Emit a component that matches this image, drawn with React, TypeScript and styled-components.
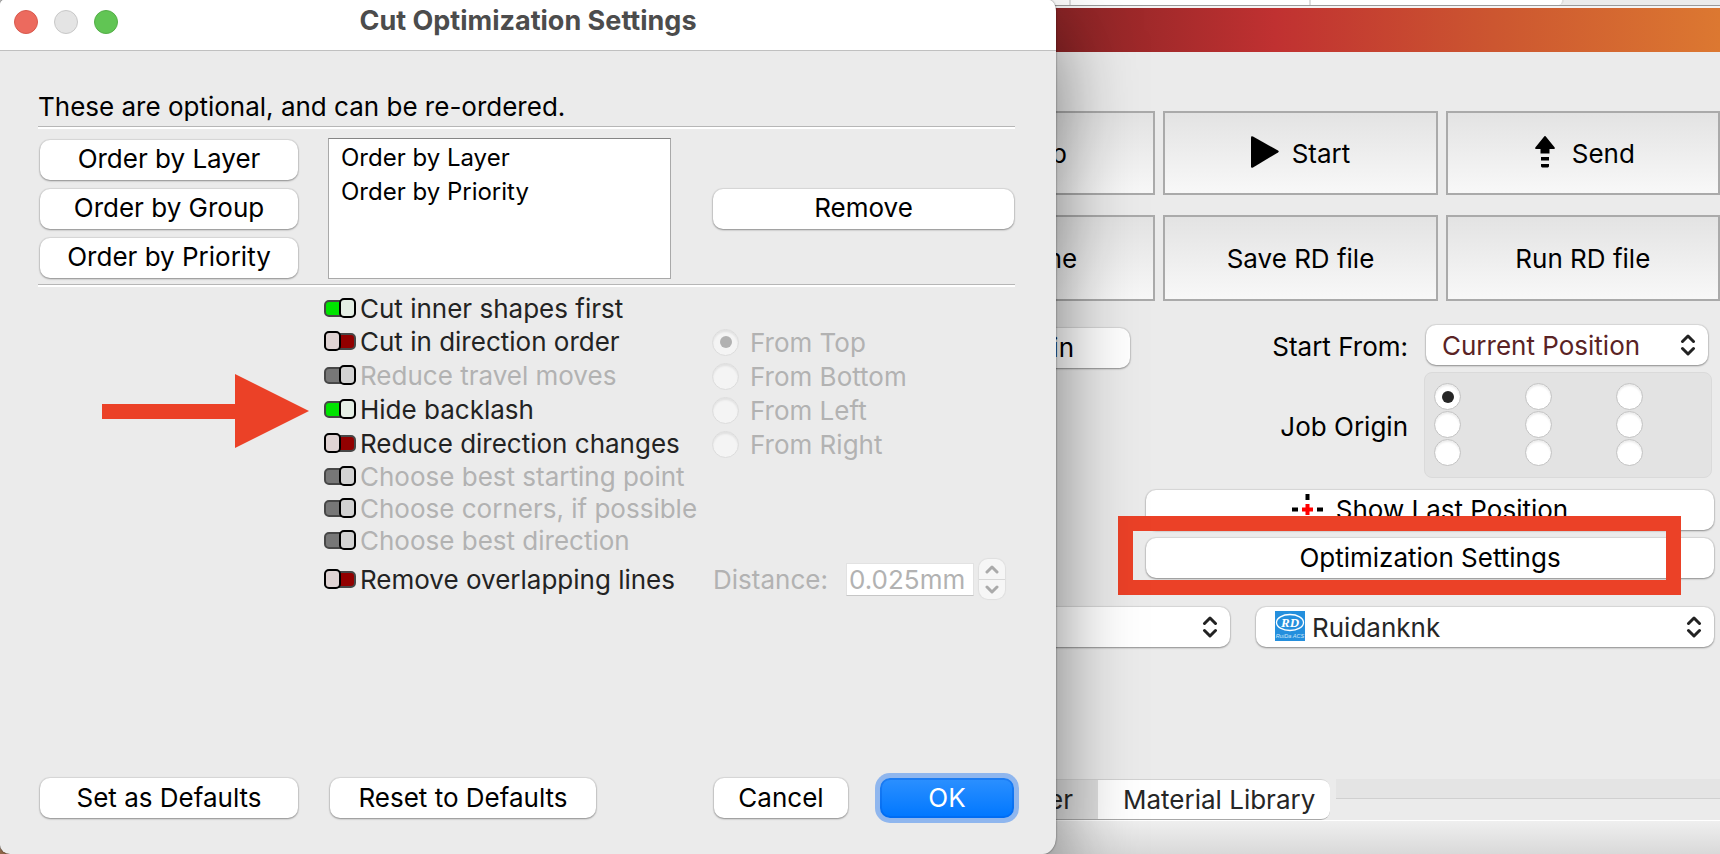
import React from "react";
import styled, { createGlobalStyle, css } from "styled-components";

const GlobalStyle = createGlobalStyle`
  *, *::before, *::after { box-sizing: border-box; }
  body {
    margin: 0;
    background: #c4c4c4;
    color: #000;
    font: 400 26px/32px Inter, "Liberation Sans", sans-serif;
  }
  button, input, select { font: inherit; color: inherit; margin: 0; }
  fieldset { border: 0; margin: 0; padding: 0; min-width: 0; }
`;

const Desktop = styled.div`
  display: grid;
  grid-template-columns: 132fr 83fr;
  min-height: 100vh;
  overflow: hidden;
  background: linear-gradient(#c4c4c4 calc(100% - 9px), #b5825c calc(100% - 3px));
`;

/* ---------- shared controls ---------- */

const raised = css`
  border: 0;
  border-radius: 10px;
  background: #fff;
  box-shadow: 0 0 1px 1px rgba(0, 0, 0, 0.08), 0 1px 2px rgba(0, 0, 0, 0.35);
`;

const PushButton = styled.button<{ $primary?: boolean }>`
  ${raised}
  display: flex;
  align-items: center;
  justify-content: center;
  gap: 13px;
  height: 40px;
  padding: 0 16px 1px;
  white-space: nowrap;
  ${(p) =>
    p.$primary &&
    css`
      color: #fff;
      background: linear-gradient(#2c90ff, #0077ff);
      box-shadow: inset 0 0 0 2px rgba(0, 90, 220, 0.35), 0 0 0 5px #8fb6ee;
    `}
`;

const Radio = styled.input.attrs({ type: "radio" })`
  appearance: none;
  flex: none;
  display: grid;
  place-items: center;
  width: 27px;
  height: 27px;
  border-radius: 50%;
  border: 1px solid #c2c2c2;
  background: #fff;
  box-shadow: inset 0 2px 2px rgba(0, 0, 0, 0.08);
  &:checked::before {
    content: "";
    width: 12px;
    height: 12px;
    border-radius: 50%;
    background: #262626;
  }
  &:disabled {
    border-color: #dcdcdc;
    background: #f4f4f4;
  }
  &:disabled:checked::before { background: #b1b1b1; }
`;

const SelectBox = styled.div`
  position: relative;
  min-width: 0;
  svg { position: absolute; right: 12px; top: 9px; pointer-events: none; }
`;

const Select = styled.select<{ $color: string; $indent: number }>`
  ${raised}
  appearance: none;
  display: block;
  width: 100%;
  height: 40px;
  padding: 2px 40px 0 ${(p) => p.$indent}px;
  color: ${(p) => p.$color};
`;

const Chevrons = () => (
  <svg width="16" height="22" viewBox="0 0 16 22" fill="none" stroke="#222" strokeWidth="3" strokeLinecap="round" strokeLinejoin="round" aria-hidden="true">
    <path d="M2.5 7.5 8 2l5.500 5.500M2.500 14.500 8 20l5.500-5.500" />
  </svg>
);

/* ---------- dialog ---------- */

const Dialog = styled.form`
  grid-area: 1 / 1;
  position: relative;
  z-index: 1;
  display: flex;
  flex-direction: column;
  min-width: 0;
  background: #ebebeb;
  border-radius: 4px 7px 13px 10px / 5px 12px 17px 9px;
  box-shadow: 0 0 2px rgba(0, 0, 0, 0.6), 0 30px 80px rgba(0, 0, 0, 0.5);
`;

const TitleBar = styled.header`
  display: grid;
  grid-template-columns: 1fr auto 1fr;
  height: 51px;
  padding: 0 14px;
  background: #fff;
  border-bottom: 1px solid #c0c0c0;
  border-radius: 4px 7px 0 0 / 5px 12px 0 0;
`;

const Lights = styled.div`
  display: flex;
  gap: 16px;
  padding-top: 10px;
`;

const Light = styled.button<{ $fill: string; $edge: string }>`
  width: 24px;
  height: 24px;
  padding: 0;
  border-radius: 50%;
  border: 1px solid ${(p) => p.$edge};
  background: ${(p) => p.$fill};
`;

const Title = styled.h1`
  margin: 0;
  padding-top: 5px;
  font-size: 27px;
  line-height: 32px;
  font-weight: 700;
  color: #4c4c4c;
`;

const DialogBody = styled.div`
  display: flex;
  flex-direction: column;
  flex: 1;
  padding: 40px 41px 36px 38px;
`;

const Intro = styled.p`
  margin: 0 0 3px;
`;

const Rule = styled.hr`
  width: 100%;
  height: 3px;
  margin: 0;
  border: 0;
  border-top: 1px solid #b6b6b6;
  background: #fff;
`;

const Ordering = styled.section`
  display: grid;
  grid-template-columns: 258px 343px minmax(0, 1fr);
  column-gap: 30px;
  align-items: center;
  padding: 9px 1px 5px 2px;
`;

const OrderButtons = styled.div`
  display: grid;
  gap: 9px;
`;

const OrderList = styled.ul`
  list-style: none;
  align-self: stretch;
  min-height: 141px;
  margin: 0;
  padding: 2px 12px;
  background: #fff;
  border: 1px solid #a9a9a9;
  border-top-color: #858585;
  font-size: 24px;
  line-height: 34px;
`;

const RemoveButton = styled(PushButton)`
  margin-left: 12px;
`;

const Options = styled.section`
  display: grid;
  grid-template-columns: minmax(0, 388px) 1fr;
  padding: 5px 0 0 286px;
`;

const OptionGroup = styled.div<{ $row: number }>`
  grid-column: 1;
  display: grid;
  grid-auto-rows: ${(p) => p.$row}px;
  white-space: nowrap;
`;

const Option = styled.label<{ $off?: boolean; $gap: number }>`
  display: flex;
  align-items: center;
  gap: ${(p) => p.$gap}px;
  color: ${(p) => (p.$off ? "#b2b2b2" : "#232323")};
`;

const OptionText = styled.span`
  padding-top: 2px;
`;

const Toggle = styled.input.attrs({ type: "checkbox" })`
  appearance: none;
  flex: none;
  display: grid;
  grid-template-columns: 1fr;
  align-items: center;
  width: 32px;
  height: 20px;
  &::before, &::after {
    content: "";
    grid-area: 1 / 1;
  }
  &::before {
    height: 17px;
    border: 2px solid #474747;
    border-radius: 5px;
    background: #920000;
  }
  &::after {
    width: 17px;
    height: 20px;
    border: 2px solid #000;
    border-radius: 5px;
    background: #dfd3d3;
  }
  &:checked::before { background: #00e400; }
  &:checked::after { justify-self: end; background: #e5efe5; }
  &:disabled::before { background: #777; }
  &:disabled::after { background: #d2d2d2; }
`;

const Directions = styled.fieldset`
  grid-column: 2;
  display: grid;
  grid-auto-rows: 34px;
  margin: 1px 0 -1px;
`;

const Distance = styled.div`
  grid-column: 2;
  display: flex;
  align-items: center;
  color: #b2b2b2;
  label { width: 134px; padding: 2px 0 0 1px; }
`;

const DistanceInput = styled.input`
  width: 128px;
  height: 33px;
  padding: 0 2px;
  border: 1px solid #e2e2e2;
  border-bottom: 1px solid #c6c6c6;
  background: #fff;
`;

const Stepper = styled.div`
  display: grid;
  grid-template-rows: 1fr 1fr;
  width: 26px;
  height: 40px;
  margin-left: 5px;
  border-radius: 9px;
  background: #f6f6f6;
  box-shadow: 0 0 1px 1px rgba(0, 0, 0, 0.05);
`;

const Step = styled.button`
  display: grid;
  place-items: center;
  padding: 0;
  border: 0;
  background: none;
  & + & { border-top: 1px solid #d8d8d8; }
`;

const StepIcon = ({ d }: { d: string }) => (
  <svg width="14" height="10" viewBox="0 0 14 10" fill="none" stroke="#aaa" strokeWidth="3" strokeLinecap="round" strokeLinejoin="round" aria-hidden="true">
    <path d={d} />
  </svg>
);

const DialogFooter = styled.footer`
  display: grid;
  grid-template-columns: 258px 266px 1fr 134px 134px;
  column-gap: 32px;
  margin-top: auto;
  padding: 0 1px 0 2px;
  ${PushButton}:nth-last-child(2) { grid-column: 4; }
`;

const PointerArrow = styled.svg`
  position: absolute;
  left: 102px;
  top: 374px;
`;

/* ---------- window behind ---------- */

const MainWindow = styled.main`
  grid-area: 1 / 2;
  display: flex;
  flex-direction: column;
  min-width: 0;
  margin-left: -175px;
  background: #ebebeb;
`;

const TopStrip = styled.div`
  display: flex;
  height: 8px;
  border-bottom: 2px solid #f4f4f4;
  background: linear-gradient(#ebebeb 5px, #9a9a9a 5px);
`;

const TopTab = styled.div<{ $width: number; $last?: boolean }>`
  width: ${(p) => p.$width}px;
  height: 5px;
  background: #fff;
  border-right: 2px solid #dedede;
  border-bottom-right-radius: ${(p) => (p.$last ? 6 : 0)}px;
`;

const Banner = styled.div`
  height: 44px;
  background: linear-gradient(90deg, #882325 20%, #c03131 47%, #cc5630 73%, #dc7831);
`;

const Panel = styled.div`
  display: flex;
  flex-direction: column;
  padding-top: 59px;
`;

const JobButtons = styled.div`
  display: grid;
  grid-template-columns: repeat(3, 1fr);
  grid-template-rows: 84px 86px;
  gap: 20px 8px;
`;

const JobButton = styled.button`
  display: flex;
  align-items: center;
  justify-content: center;
  gap: 13px;
  padding: 2px 0 0;
  border: 2px solid #aaa;
  background: linear-gradient(#e3e3e3, #f8f8f8);
  white-space: nowrap;
  svg { margin-bottom: 4px; }
`;

const PositionGrid = styled.div`
  display: grid;
  grid-template-columns: 249px 1fr 288px;
  grid-template-rows: 43px 106px;
  gap: 4px 16px;
  padding: 24px 8px 0 0;
`;

const GoButton = styled(PushButton)`
  align-self: end;
  justify-content: flex-end;
  padding-right: 56px;
`;

const FieldLabel = styled.label`
  grid-column: 2;
  padding-top: 6px;
  text-align: right;
  white-space: nowrap;
`;

const OriginLabel = styled.span`
  grid-column: 2;
  align-self: center;
  padding-top: 3px;
  text-align: right;
  white-space: nowrap;
`;

const StartSelect = styled(SelectBox)`
  margin: 0 4px 0 2px;
`;

const OriginGrid = styled.div`
  display: grid;
  grid-template-columns: 1fr 1fr 1fr;
  grid-auto-rows: 28px;
  padding: 10px 4px 0 9px;
  border: 1px solid #dadada;
  border-radius: 8px;
  background: #e3e3e3;
`;

const WideButtons = styled.div`
  position: relative;
  display: grid;
  gap: 8px;
  margin: 12px 6px 29px 265px;
`;

const Highlight = styled.div`
  position: absolute;
  left: -28px;
  right: 33px;
  top: 26px;
  height: 79px;
  border: 15px solid #eb4127;
  pointer-events: none;
`;

const DeviceRow = styled.div`
  display: grid;
  grid-template-columns: 349fr 458fr;
  gap: 26px;
  padding-right: 6px;
`;

const DeviceBox = styled(SelectBox)`
  svg:first-child { right: auto; left: 19px; top: 4px; }
`;

const TabRow = styled.div`
  display: flex;
  margin-top: auto;
  height: 42px;
  border-bottom: 1px solid #fff;
`;

const Tab = styled.button<{ $active?: boolean }>`
  display: flex;
  justify-content: ${(p) => (p.$active ? "flex-start" : "flex-end")};
  align-items: center;
  flex: 0 0 ${(p) => (p.$active ? 232 : 217)}px;
  padding: ${(p) => (p.$active ? "0 0 0 25px" : "0 25px 0 0")};
  border: 1px solid #d2d2d2;
  border-width: 1px 0;
  border-bottom-color: #a8a8a8;
  border-radius: ${(p) => (p.$active ? "0 9px 9px 0" : "9px 0 0 9px")};
  background: ${(p) => (p.$active ? "#fff" : "#dfdfdf")};
  color: #262626;
  white-space: nowrap;
`;

const TabFiller = styled.div`
  flex: 1;
  height: 20px;
  margin-left: 6px;
  background: #e4e4e4;
  border-bottom: 1px solid #d0d0d0;
`;

const WindowFoot = styled.div`
  height: 33px;
  background: linear-gradient(#efefef, #d9d9d9);
`;

/* ---------- icons ---------- */

const PlayIcon = () => (
  <svg width="28" height="32" viewBox="0 0 28 32" aria-hidden="true">
    <path d="M0 1.500Q0-.5 2 .5L27 14.500q1.500 1 0 2L2 31.500q-2 1-2-1z" />
  </svg>
);

const StopIcon = () => (
  <svg width="28" height="32" viewBox="0 0 28 32" aria-hidden="true">
    <rect y="2" width="28" height="28" rx="1" />
  </svg>
);

const SendIcon = () => (
  <svg width="28" height="32" viewBox="0 0 28 32" aria-hidden="true">
    <path d="M14 0q.6 0 1.200 1l8.500 10.500q.6 1.500-.7 1.500h-4.500v4.500h-9V13H5q-1.300 0-.7-1.500L12.800 1q.6-1 1.200-1zM10 21h8v3.500h-8zM10 28h8v2.500l-1 1h-6l-1-1z" />
  </svg>
);

const FrameIcon = () => (
  <svg width="28" height="32" viewBox="0 0 28 32" fill="none" stroke="#000" strokeWidth="3" aria-hidden="true">
    <rect x="2" y="4" width="24" height="24" strokeDasharray="5 3" />
  </svg>
);

const CrosshairIcon = () => (
  <svg width="31" height="31" viewBox="0 0 31 31" strokeWidth="4" aria-hidden="true">
    <path stroke="#000" d="M0 15.500h6M25 15.500h6M15.500 0v6M15.500 25v6" />
    <path stroke="#f00" d="M10 15.500h11M15.500 10v11" />
  </svg>
);

const RuidaLogo = () => (
  <svg width="30" height="30" viewBox="0 0 30 30" aria-hidden="true">
    <rect width="30" height="30" fill="#248fdd" />
    <ellipse cx="15" cy="11.500" rx="13.500" ry="8" fill="none" stroke="#fff" strokeWidth="1.300" />
    <text x="15" y="16" textAnchor="middle" fill="#fff" fontFamily="Liberation Serif, serif" fontSize="13" fontWeight="700" fontStyle="italic">RD</text>
    <text x="15" y="26.500" textAnchor="middle" fill="#cfe6f8" fontFamily="Liberation Sans, sans-serif" fontSize="5.600" fontStyle="italic">RuiDa ACS</text>
  </svg>
);

/* ---------- data ---------- */

type Opt = { label: string; on: boolean; disabled?: boolean };

const optionGroups: { row: number; items: Opt[] }[] = [
  { row: 32, items: [{ label: "Cut inner shapes first", on: true }] },
  {
    row: 34,
    items: [
      { label: "Cut in direction order", on: false },
      { label: "Reduce travel moves", on: true, disabled: true },
      { label: "Hide backlash", on: true },
      { label: "Reduce direction changes", on: false },
    ],
  },
  {
    row: 32,
    items: [
      { label: "Choose best starting point", on: true, disabled: true },
      { label: "Choose corners, if possible", on: true, disabled: true },
      { label: "Choose best direction", on: true, disabled: true },
    ],
  },
  { row: 46, items: [{ label: "Remove overlapping lines", on: false }] },
];

const directions = ["From Top", "From Bottom", "From Left", "From Right"];
const origins = [
  "Top left", "Top", "Top right",
  "Left", "Center", "Right",
  "Bottom left", "Bottom", "Bottom right",
];

export default function App() {
  return (
    <Desktop>
      <GlobalStyle />
      <Dialog role="dialog" aria-labelledby="dialog-title" onSubmit={(e) => e.preventDefault()}>
        <TitleBar>
          <Lights>
            <Light type="button" aria-label="Close" $fill="#ec6a5e" $edge="#d8594d" />
            <Light type="button" aria-label="Minimize" $fill="#e4e4e4" $edge="#c8c8c8" />
            <Light type="button" aria-label="Zoom" $fill="#61c554" $edge="#54ae48" />
          </Lights>
          <Title id="dialog-title">Cut Optimization Settings</Title>
        </TitleBar>
        <DialogBody>
          <Intro>These are optional, and can be re-ordered.</Intro>
          <Rule />
          <Ordering>
            <OrderButtons>
              <PushButton type="button">Order by Layer</PushButton>
              <PushButton type="button">Order by Group</PushButton>
              <PushButton type="button">Order by Priority</PushButton>
            </OrderButtons>
            <OrderList>
              <li>Order by Layer</li>
              <li>Order by Priority</li>
            </OrderList>
            <RemoveButton type="button">Remove</RemoveButton>
          </Ordering>
          <Rule />
          <Options>
            {optionGroups.map((group, i) => (
              <React.Fragment key={i}>
                <OptionGroup $row={group.row}>
                  {group.items.map((o) => (
                    <Option key={o.label} $off={o.disabled} $gap={4}>
                      <Toggle defaultChecked={o.on} disabled={o.disabled} />
                      <OptionText>{o.label}</OptionText>
                    </Option>
                  ))}
                </OptionGroup>
                {i === 1 && (
                  <Directions disabled aria-label="Direction order">
                    {directions.map((d, n) => (
                      <Option key={d} $off $gap={11}>
                        <Radio name="direction" defaultChecked={n === 0} />
                        <OptionText>{d}</OptionText>
                      </Option>
                    ))}
                  </Directions>
                )}
              </React.Fragment>
            ))}
            <Distance>
              <label htmlFor="distance">Distance:</label>
              <DistanceInput id="distance" type="text" defaultValue="0.025mm" disabled />
              <Stepper>
                <Step type="button" disabled aria-label="Increase distance">
                  <StepIcon d="M2 8 7 3l5 5" />
                </Step>
                <Step type="button" disabled aria-label="Decrease distance">
                  <StepIcon d="M2 2l5 5 5-5" />
                </Step>
              </Stepper>
            </Distance>
          </Options>
          <DialogFooter>
            <PushButton type="button">Set as Defaults</PushButton>
            <PushButton type="button">Reset to Defaults</PushButton>
            <PushButton type="button">Cancel</PushButton>
            <PushButton type="submit" $primary>OK</PushButton>
          </DialogFooter>
        </DialogBody>
        <PointerArrow width="207" height="75" viewBox="0 0 207 75" fill="#eb4127" aria-hidden="true">
          <path d="M0 30h133V0l74 37L133 74V45H0z" />
        </PointerArrow>
      </Dialog>

      <MainWindow>
        <TopStrip>
          <TopTab $width={190} />
          <TopTab $width={240} />
          <TopTab $width={253} $last />
        </TopStrip>
        <Banner />
        <Panel>
          <JobButtons>
            <JobButton type="button"><StopIcon />Stop</JobButton>
            <JobButton type="button"><PlayIcon />Start</JobButton>
            <JobButton type="button"><SendIcon />Send</JobButton>
            <JobButton type="button"><FrameIcon />Frame</JobButton>
            <JobButton type="button">Save RD file</JobButton>
            <JobButton type="button">Run RD file</JobButton>
          </JobButtons>
          <PositionGrid>
            <GoButton type="button">Go to Origin</GoButton>
            <FieldLabel htmlFor="start-from">Start From:</FieldLabel>
            <StartSelect>
              <Select id="start-from" $color="#5a2325" $indent={16}>
                <option>Current Position</option>
              </Select>
              <Chevrons />
            </StartSelect>
            <OriginLabel id="job-origin">Job Origin</OriginLabel>
            <OriginGrid role="radiogroup" aria-labelledby="job-origin">
              {origins.map((o, n) => (
                <Radio key={o} name="origin" aria-label={o} defaultChecked={n === 0} />
              ))}
            </OriginGrid>
          </PositionGrid>
          <WideButtons>
            <PushButton type="button"><CrosshairIcon />Show Last Position</PushButton>
            <PushButton type="button">Optimization Settings</PushButton>
            <Highlight />
          </WideButtons>
          <DeviceRow>
            <SelectBox>
              <Select aria-label="Port" $color="#262626" $indent={16}>
                <option></option>
              </Select>
              <Chevrons />
            </SelectBox>
            <DeviceBox>
              <RuidaLogo />
              <Select aria-label="Device" $color="#262626" $indent={56}>
                <option>Ruidanknk</option>
              </Select>
              <Chevrons />
            </DeviceBox>
          </DeviceRow>
        </Panel>
        <TabRow role="tablist">
          <Tab type="button" role="tab" aria-selected="false">Laser</Tab>
          <Tab type="button" role="tab" aria-selected="true" $active>Material Library</Tab>
          <TabFiller />
        </TabRow>
        <WindowFoot />
      </MainWindow>
    </Desktop>
  );
}
